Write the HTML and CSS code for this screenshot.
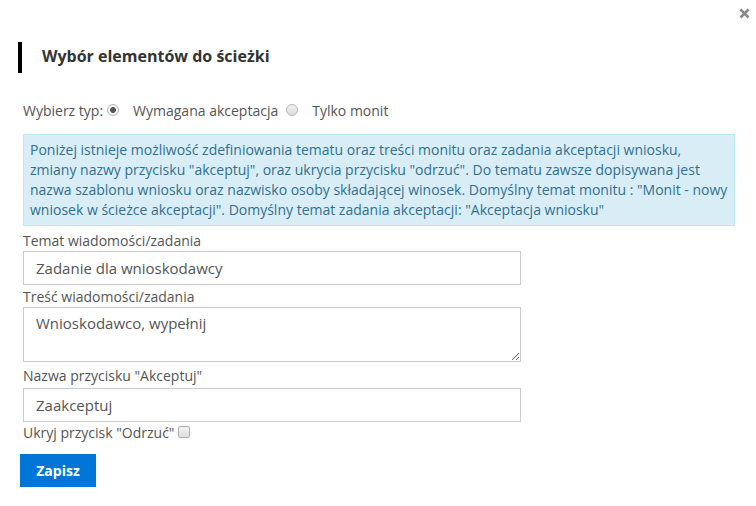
FILE: index.html
```html
<!DOCTYPE html>
<html lang="pl">
<head>
<meta charset="utf-8">
<title>Wybór elementów do ścieżki</title>
<link rel="stylesheet" href="styles.css">
</head>
<body>
<div class="dialog">
  <div class="topbar">
    <button class="close" type="button" aria-label="Zamknij">
      <svg width="11" height="11" viewBox="0 0 11 11"><path d="M1.5 1.5 L9.5 9.5 M9.5 1.5 L1.5 9.5" stroke="#8a8a8a" stroke-width="2.6" stroke-linecap="butt"/></svg>
    </button>
  </div>
  <h2 class="title">Wybór elementów do ścieżki</h2>
  <div class="content">
    <div class="type-row">
      <span class="type-label">Wybierz typ:</span>
      <input class="radio" type="radio" name="typ" id="t1" checked>
      <label class="radio-label" for="t1">Wymagana akceptacja</label>
      <input class="radio" type="radio" name="typ" id="t2">
      <label class="radio-label" for="t2">Tylko monit</label>
    </div>
    <div class="info">Poniżej istnieje możliwość zdefiniowania tematu oraz treści monitu oraz zadania akceptacji wniosku, zmiany nazwy przycisku "akceptuj", oraz ukrycia przycisku "odrzuć". Do tematu zawsze dopisywana jest nazwa szablonu wniosku oraz nazwisko osoby składającej winosek. Domyślny temat monitu : "Monit - nowy wniosek w ścieżce akceptacji". Domyślny temat zadania akceptacji: "Akceptacja wniosku"</div>
    <label class="field-label first" for="f1">Temat wiadomości/zadania</label>
    <input class="field" id="f1" type="text" value="Zadanie dla wnioskodawcy">
    <label class="field-label" for="f2">Treść wiadomości/zadania</label>
    <textarea class="field area" id="f2">Wnioskodawco, wypełnij</textarea>
    <label class="field-label gap" for="f3">Nazwa przycisku "Akceptuj"</label>
    <input class="field" id="f3" type="text" value="Zaakceptuj">
    <div class="check-row">
      <label class="field-label inline" for="f4">Ukryj przycisk "Odrzuć"</label>
      <input class="check" id="f4" type="checkbox">
    </div>
    <button class="save" type="button">Zapisz</button>
  </div>
</div>
</body>
</html>
```

FILE: styles.css
```css
html, body {
  margin: 0;
  padding: 0;
  background: #fff;
}
body {
  font-family: "Open Sans", "Liberation Sans", sans-serif;
  color: #555;
  font-size: 14px;
}
.dialog {
  width: 756px;
}
.topbar {
  height: 26px;
  display: flex;
  justify-content: flex-end;
  align-items: center;
  padding-right: 5px;
}
.close {
  border: 0;
  background: transparent;
  padding: 0;
  margin: 0 1px 0 0;
  width: 11px;
  height: 11px;
  display: flex;
}
.title {
  margin: 16px 0 0 18px;
  border-left: 4px solid #000;
  padding-left: 20px;
  height: 31px;
  line-height: 29px;
  font-size: 16px;
  font-weight: 700;
  color: #333;
}
.content {
  padding: 28px 21px 0 23px;
  display: flex;
  flex-direction: column;
  align-items: flex-start;
}
.type-row {
  display: flex;
  align-items: center;
  height: 20px;
  line-height: 20px;
}
.type-label {
  margin-right: 4px;
}
.radio {
  appearance: none;
  -webkit-appearance: none;
  width: 12px;
  height: 12px;
  margin: 0 14px 0 0;
  border: 1px solid #b4b4b4;
  border-radius: 50%;
  background: linear-gradient(#f2f2f2, #dcdcdc);
  box-sizing: border-box;
  position: relative;
  top: -1px;
}
.radio:checked {
  background: radial-gradient(circle, #555 0 2.6px, #f4f4f4 3.2px);
}
.radio-label {
  margin-right: 8px;
}
.info {
  margin-top: 13px;
  box-sizing: border-box;
  width: 712px;
  background: #d9edf7;
  border: 1px solid #bce8f1;
  color: #31708f;
  padding: 5px 6px;
  line-height: 20px;
}
.field-label {
  display: block;
  line-height: 18px;
  margin-top: 3px;
  margin-bottom: 1px;
}
.field-label.first {
  margin-top: 6px;
}
.field {
  box-sizing: border-box;
  width: 498px;
  height: 34px;
  border: 1px solid #ccc;
  border-radius: 0;
  padding: 0 12px;
  font-family: "Open Sans", "Liberation Sans", sans-serif;
  font-size: 15px;
  color: #555;
  margin: 0;
  background: #fff;
}
.area {
  height: 55px;
  padding: 5px 12px;
  line-height: 20px;
  resize: vertical;
}
.field-label.gap {
  margin-top: 5px;
  margin-bottom: 3px;
}
.check-row {
  display: flex;
  align-items: center;
  margin-top: 2px;
}
.field-label.inline {
  margin: 0 4px 0 0;
}
.check {
  appearance: none;
  -webkit-appearance: none;
  width: 12px;
  height: 12px;
  margin: 0;
  border: 1px solid #b0b0b0;
  border-radius: 2px;
  background: linear-gradient(#f2f2f2, #dedede);
  box-sizing: border-box;
  position: relative;
  top: -1px;
}
.save {
  margin: 12px 0 0 -3px;
  width: 76px;
  height: 33px;
  border: 0;
  border-radius: 0;
  background: #0275d8;
  color: #fff;
  font-family: "Open Sans", "Liberation Sans", sans-serif;
  font-size: 14px;
  font-weight: 700;
  padding: 0;
}
```
